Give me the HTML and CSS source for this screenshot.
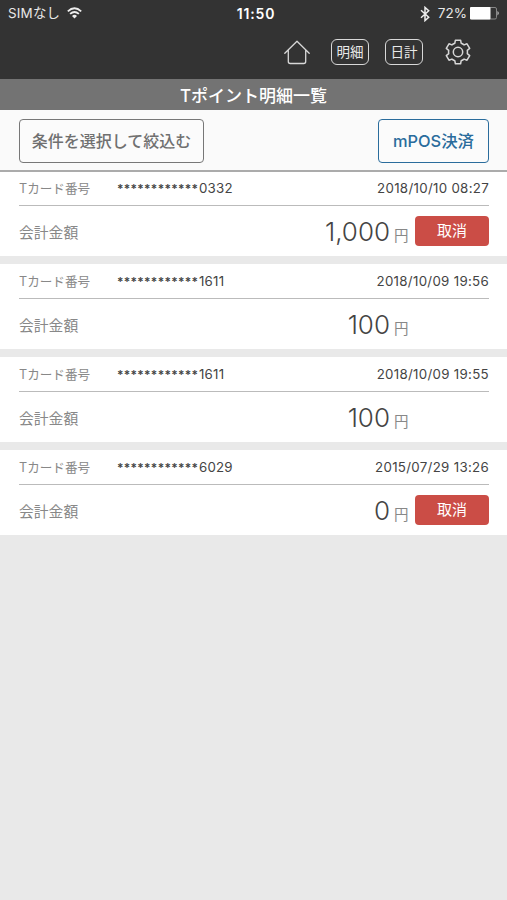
FILE: index.html
```html
<!DOCTYPE html>
<html lang="ja">
<head>
<meta charset="utf-8">
<title>Tポイント明細一覧</title>
<link rel="stylesheet" href="styles.css">
</head>
<body>
<header class="header">
  <div class="status">
    <div class="carrier"><span class="sim">SIMなし</span>
      <svg class="wifi" width="15" height="12" viewBox="0 0 15 12" fill="none" stroke="#eee" stroke-width="1.8"><path d="M.8 4.3Q7.5-1.8 14.2 4.3M3.1 6.9Q7.5 3 11.9 6.9"/><path d="M5 8.9Q7.5 6.7 10 8.9L7.5 11.5Z" fill="#eee" stroke="none"/></svg>
    </div>
    <div class="clock">11:50</div>
    <div class="power">
      <svg width="10" height="16" viewBox="0 0 10 16" fill="none" stroke="#eee" stroke-width="1.5"><path d="M1 4.3L8.7 11.3 5 14.6V1.4L8.7 4.7 1 11.7"/></svg>
      <span class="percent">72%</span>
      <svg width="30" height="13" viewBox="0 0 30 13"><rect x=".5" y=".5" width="26" height="11.5" rx="1.5" fill="none" stroke="#888"/><rect x="0" y="0" width="20.5" height="12.5" rx="1" fill="#fff"/><path d="M27.5 4Q30 6.2 27.5 8.5Z" fill="#ccc"/></svg>
    </div>
  </div>
  <nav class="nav">
    <svg class="home" width="26" height="25" viewBox="0 0 26 25" fill="none" stroke="#d8d8d8" stroke-width="1.3" stroke-linecap="round" stroke-linejoin="round"><path d="M.8 13.3L13 1.2 25.2 13.3M4.3 10.5V21.5Q4.3 23.5 6.3 23.5H19.7Q21.7 23.5 21.7 21.5V10.5"/></svg>
    <span class="tab">明細</span>
    <span class="tab tab-daily">日計</span>
    <svg class="gear" width="26" height="26" viewBox="0 0 26 26" fill="none" stroke="#d8d8d8" stroke-width="1.5" stroke-linejoin="round"><circle cx="13" cy="13" r="4.7"/><path d="M10.4 1.2H15.6L16.2 4.3Q17.8 4.9 19.1 5.9L22 4.8 24.7 9.3 22.3 11.3Q22.6 13 22.3 14.7L24.7 16.7 22 21.2 19.1 20.1Q17.8 21.1 16.2 21.7L15.6 24.8H10.4L9.8 21.7Q8.2 21.1 6.9 20.1L4 21.2 1.3 16.7 3.7 14.7Q3.4 13 3.7 11.3L1.3 9.3 4 4.8 6.9 5.9Q8.2 4.9 9.8 4.3Z"/></svg>
  </nav>
</header>
<h1 class="title">Tポイント明細一覧</h1>
<div class="toolbar">
  <button class="button filter">条件を選択して絞込む</button>
  <button class="button mpos">mPOS決済</button>
</div>
<main class="list">
  <section class="card">
    <div class="meta"><span class="label">Tカード番号</span><span class="mask">************</span><span class="number">0332</span><time class="date">2018/10/10 08:27</time></div>
    <div class="sum"><span class="caption">会計金額</span><span class="amount">1,000</span><span class="yen">円</span><button class="cancel">取消</button></div>
  </section>
  <section class="card">
    <div class="meta"><span class="label">Tカード番号</span><span class="mask">************</span><span class="number">1611</span><time class="date">2018/10/09 19:56</time></div>
    <div class="sum"><span class="caption">会計金額</span><span class="amount">100</span><span class="yen">円</span></div>
  </section>
  <section class="card">
    <div class="meta"><span class="label">Tカード番号</span><span class="mask">************</span><span class="number">1611</span><time class="date">2018/10/09 19:55</time></div>
    <div class="sum"><span class="caption">会計金額</span><span class="amount">100</span><span class="yen">円</span></div>
  </section>
  <section class="card">
    <div class="meta"><span class="label">Tカード番号</span><span class="mask">************</span><span class="number">6029</span><time class="date">2015/07/29 13:26</time></div>
    <div class="sum"><span class="caption">会計金額</span><span class="amount">0</span><span class="yen">円</span><button class="cancel">取消</button></div>
  </section>
</main>
</body>
</html>
```
FILE: styles.css
```css
* { box-sizing: border-box; }
body {
  margin: 0;
  min-height: 900px;
  background: #e9e9e9;
  color: #444;
  font-family: Inter, "Noto Sans CJK JP", sans-serif;
}
button { font-family: inherit; padding: 0; margin: 0; }
svg { display: block; flex: none; }
.header { height: 79px; background: #333; color: #e8e8e8; }
.status {
  height: 27px;
  padding: 0 7px 0 8px;
  display: grid;
  grid-template-columns: 1fr auto 1fr;
  align-items: center;
  font-size: 13.5px;
  line-height: 27px;
}
.carrier { display: flex; align-items: center; gap: 7px; white-space: nowrap; }
.sim { font-size: 13.4px; letter-spacing: .2px; }
.wifi { margin-top: -2px; }
.clock { font-weight: 600; letter-spacing: .8px; margin-left: 4px; color: #fff; font-size: 14px; }
.power { display: flex; align-items: center; justify-content: flex-end; gap: 3px; }
.percent { margin-left: 5px; }
.nav {
  height: 50px;
  padding-right: 36px;
  display: flex;
  justify-content: flex-end;
  align-items: center;
}
.tab {
  width: 38px;
  height: 26px;
  margin-left: 21px;
  border: 1.5px solid #d8d8d8;
  border-radius: 6px;
  font-size: 13.5px;
  line-height: 25px;
  text-align: center;
}
.tab-daily { margin-left: 16px; }
.gear { margin-left: 22px; }
.title {
  margin: 0;
  height: 31px;
  padding-top: 1px;
  background: #737373;
  color: #fff;
  font-size: 17px;
  font-weight: 500;
  line-height: 32px;
  text-align: center;
}
.toolbar {
  position: relative;
  height: 62px;
  padding: 9px 18px 0 19px;
  display: flex;
  justify-content: space-between;
  background: #fafafa;
  border-bottom: 2px solid #ababab;
}
.button {
  height: 44px;
  border: 1px solid;
  border-radius: 4px;
  background: #fbfbfb;
  font-size: 16px;
  font-weight: 500;
  line-height: 42px;
}
.filter { width: 185px; color: #707070; border-color: #777; }
.mpos { width: 111px; color: #2a6c9c; border-color: #2a6c9c; font-size: 16.4px; }
.list { margin-top: -1px; display: grid; gap: 8px; }
.card { height: 85px; padding: 0 18px 0 19px; background: #fff; }
.meta {
  height: 35px;
  display: flex;
  align-items: center;
  border-bottom: 1px solid #bbb;
  font-size: 13.3px;
}
.label { width: 98px; color: #888; font-size: 12.6px; margin-top: -1px; }
.number { letter-spacing: .2px; }
.mask { width: 82px; font-size: 12px; letter-spacing: .3px; font-weight: 600; }
.date { margin-left: auto; letter-spacing: .3px; }
.sum {
  height: 50px;
  display: flex;
  align-items: center;
  white-space: nowrap;
}
.caption { flex: none; width: 60px; color: #888; font-size: 14.8px; }
.amount { flex: none; width: 311px; text-align: right; font-size: 26px; font-weight: 300; }
.yen { flex: none; margin: 7px 0 0 4px; width: 15px; font-size: 14.5px; color: #888; }
.cancel {
  width: 74px;
  height: 30px;
  margin-left: auto;
  border: 0;
  border-radius: 4px;
  background: #cb4d46;
  color: #fff;
  font-size: 15px;
  line-height: 30px;
}
```
